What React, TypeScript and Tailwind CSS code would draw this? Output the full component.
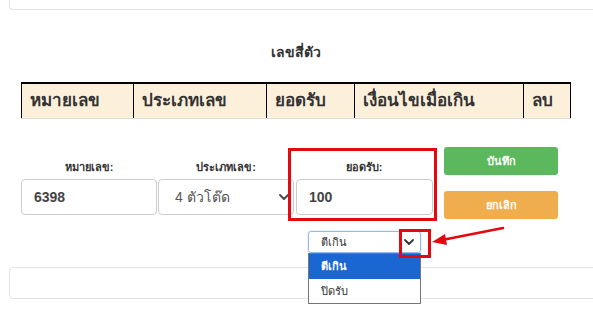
import type { ReactNode } from "react";

const font = {
  fontFamily: '"Liberation Sans", "Noto Sans", sans-serif',
};

const columns = [
  "หมายเลข",
  "ประเภทเลข",
  "ยอดรับ",
  "เงื่อนไขเมื่อเกิน",
  "ลบ",
];

function Field({
  label,
  children,
}: {
  label: string;
  children: ReactNode;
}) {
  return (
    <div className="flex w-[136px] flex-col">
      <div className="flex h-[32px] items-end justify-center pb-[4px] text-[11px] font-bold text-[#333]">
        {label}
      </div>
      {children}
    </div>
  );
}

function Chevron({ className }: { className?: string }) {
  return (
    <svg
      viewBox="0 0 10 6"
      className={className}
      fill="none"
      stroke="currentColor"
      strokeWidth="1.8"
      strokeLinecap="round"
      strokeLinejoin="round"
    >
      <path d="M1 1l4 4 4-4" />
    </svg>
  );
}

export default function App() {
  return (
    <div
      className="relative h-[335px] w-[593px] overflow-hidden bg-white"
      style={font}
    >
      {/* panel above, cut off at the top */}
      <div className="ml-[9px] mr-[-12px] h-[10px] rounded-b-[4px] border border-t-0 border-[#e3e3e3]" />

      <div className="ml-[21px] mt-[32px] w-[550px] text-center text-[14px] font-bold leading-[20px] text-[#333]">
        เลขสี่ตัว
      </div>

      <div className="ml-[21px] mt-[20px] grid w-[550px] grid-cols-[112px_133px_88px_169px_48px] border-b border-t-2 border-b-[#dddddd] border-t-black bg-[#fdf0db]">
        {columns.map((c, i) => (
          <div
            key={c}
            className={`flex h-[34px] items-center border-l border-black pl-[8px] text-[17px] font-bold text-[#333] ${
              i === columns.length - 1 ? "border-r" : ""
            }`}
          >
            {c}
          </div>
        ))}
      </div>

      <div className="ml-[21px] mt-[28px] flex">
        <Field label="หมายเลข:">
          <div className="flex h-[36px] items-center rounded-[4px] border border-[#cccccc] px-[12px] text-[14px] font-bold text-[#444]">
            6398
          </div>
        </Field>
        <div className="ml-[1px]">
          <Field label="ประเภทเลข:">
            <div className="flex h-[36px] w-[136px] items-center justify-between rounded-[4px] border border-[#cccccc] pl-[16px] pr-[4px] text-[14px] text-[#555]">
              <span>4 ตัวโต๊ด</span>
              <Chevron className="h-[6px] w-[10px] text-[#444]" />
            </div>
          </Field>
        </div>
        <div className="ml-[2px]">
          <Field label="ยอดรับ:">
            <div className="flex h-[36px] w-[137px] items-center rounded-[4px] border border-[#cccccc] px-[12px] text-[14px] font-bold text-[#444]">
              100
            </div>
          </Field>
        </div>
        <div className="ml-[12px] flex w-[114px] flex-col gap-[16px]">
          <button className="h-[28px] rounded-[3px] bg-[#5cb85c] text-[11px] font-bold text-white">
            บันทึก
          </button>
          <button className="h-[28px] rounded-[3px] bg-[#f0ad4e] text-[11px] font-bold text-white">
            ยกเลิก
          </button>
        </div>
      </div>

      <div className="ml-[308px] mt-[12px] flex h-[22px] w-[113px] items-center justify-between rounded-[3px] border border-[#8fbbe6] pl-[12px] pr-[6px] text-[11px] text-[#333] shadow-[0_0_2px_#bcd7f2]">
        <span>ตีเกิน</span>
        <Chevron className="h-[6px] w-[10px] text-[#333]" />
      </div>

      {/* panel below */}
      <div className="ml-[9px] mr-[-12px] mt-[14px] h-[32px] rounded-[4px] border border-[#e3e3e3]" />

      {/* open dropdown list */}
      <div className="absolute left-[308px] top-[253px] w-[113px] border border-[#767676] bg-white text-[11px]">
        <div className="flex h-[25px] items-center bg-[#1a66d2] pl-[12px] font-bold text-white">
          ตีเกิน
        </div>
        <div className="flex h-[24px] items-center pl-[12px] text-[#333]">
          ปิดรับ
        </div>
      </div>

      {/* annotations */}
      <div className="pointer-events-none absolute left-[288px] top-[148px] h-[73px] w-[149px] border-[3px] border-[#e4080f]" />
      <div className="pointer-events-none absolute left-[399px] top-[229px] h-[29px] w-[32px] border-[3px] border-[#e4080f]" />
      <svg
        className="pointer-events-none absolute left-0 top-0"
        width="593"
        height="335"
        viewBox="0 0 593 335"
      >
        <line
          x1="503"
          y1="228"
          x2="442"
          y2="240"
          stroke="#e4080f"
          strokeWidth="2.5"
          strokeLinecap="round"
        />
        <polygon points="432,242 445,234 447,245" fill="#e4080f" />
      </svg>
    </div>
  );
}
